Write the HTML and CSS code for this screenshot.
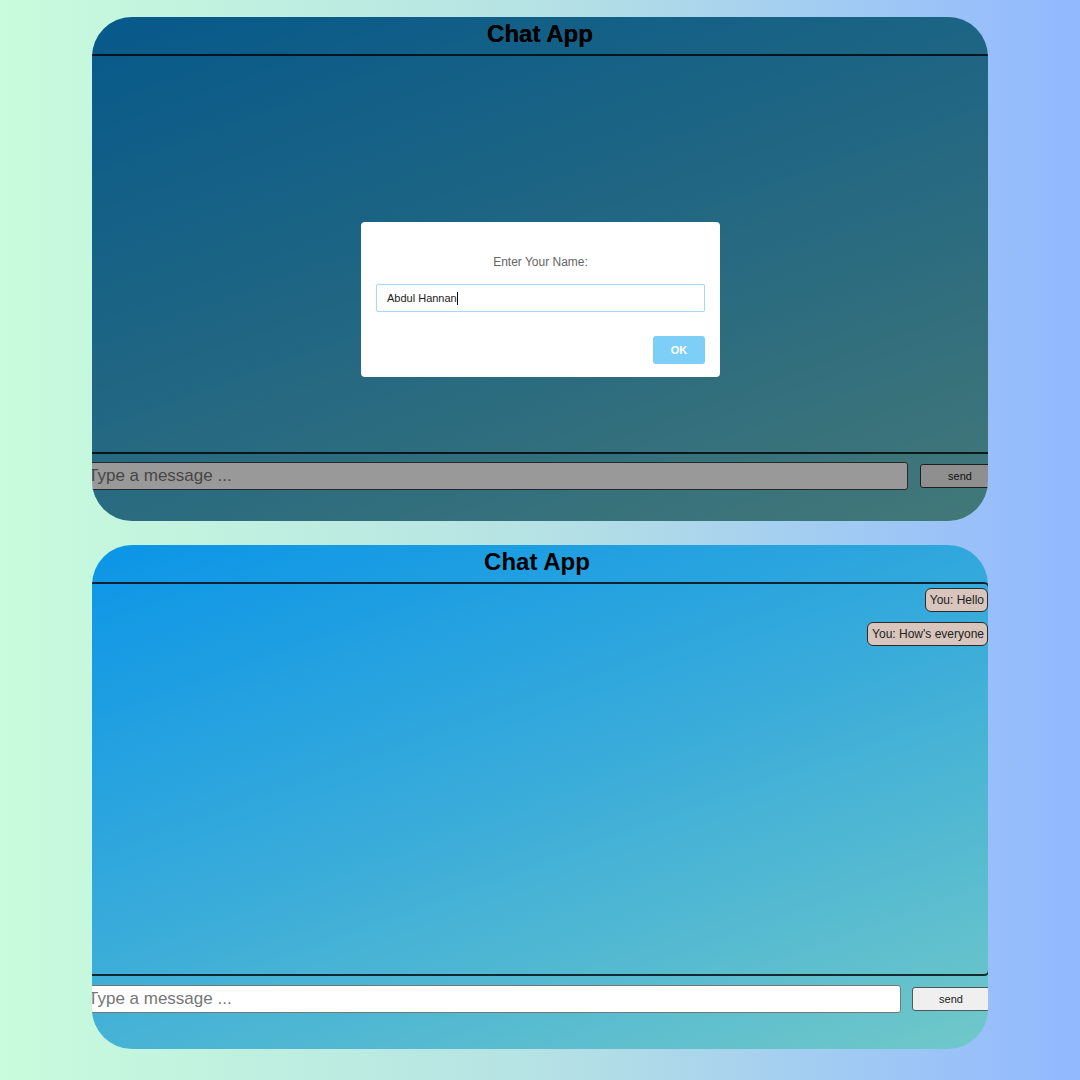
FILE: index.html
```html
<!DOCTYPE html>
<html>
<head>
<meta charset="utf-8">
<link rel="stylesheet" href="styles.css">
</head>
<body>
<div class="page">
  <section class="card card-modal">
    <div class="chat chat-top">
      <h1 class="title">Chat App</h1>
      <div class="messages messages-top"></div>
      <div class="composer composer-top">
        <input class="msg-input" type="text" placeholder="Type a message ...">
        <button class="send">send</button>
      </div>
    </div>
    <div class="overlay"></div>
    <div class="title-layer"><h1 class="title">Chat App</h1></div>
    <div class="dialog">
      <p class="dialog-label">Enter Your Name:</p>
      <div class="dialog-input"><span class="dialog-value">Abdul Hannan</span><span class="caret"></span></div>
      <div class="dialog-actions"><button class="ok">OK</button></div>
    </div>
  </section>

  <section class="card card-chat">
    <div class="chat chat-bottom">
      <h1 class="title">Chat App</h1>
      <div class="messages messages-bottom">
        <div class="bubble">You: Hello</div>
        <div class="bubble">You: How's everyone</div>
      </div>
      <div class="composer composer-bottom">
        <input class="msg-input" type="text" placeholder="Type a message ...">
        <button class="send">send</button>
      </div>
    </div>
  </section>
</div>
</body>
</html>
```

FILE: styles.css
```css
html, body {
  margin: 0;
  padding: 0;
}
body {
  width: 1080px;
  height: 1080px;
  background: linear-gradient(90deg, #c8fcdc 0%, #b5e2e4 50%, #92b8fe 100%);
  font-family: "Liberation Sans", Arial, sans-serif;
  overflow: hidden;
}
.page {
  display: flex;
  flex-direction: column;
  align-items: center;
  gap: 24px;
  padding-top: 17px;
}
.card {
  position: relative;
  width: 896px;
  height: 504px;
  border-radius: 40px;
  overflow: hidden;
  background: linear-gradient(160deg, #0b95e7 0%, #36aadb 45%, #70c8c8 100%);
}
.chat {
  display: flex;
  flex-direction: column;
}
.title {
  margin: 0;
  height: 37px;
  line-height: 34px;
  font-size: 24px;
  font-weight: bold;
  color: #000;
  text-align: center;
}
.chat-bottom .title {
  margin-left: -6px;
}
.messages {
  margin-left: -12px;
  border: 2px solid rgba(0, 0, 0, 0.78);
  border-radius: 6px;
  box-sizing: border-box;
  display: flex;
  flex-direction: column;
  align-items: flex-end;
  gap: 10px;
  padding: 4px 0 0 0;
}
.messages-top {
  height: 400px;
  margin-right: -6px;
}
.messages-bottom {
  height: 394px;
  margin-right: -2px;
}
.bubble {
  background: #d8c5bd;
  border: 1.5px solid #2b2b2b;
  border-radius: 6px;
  font-size: 12px;
  color: #222;
  padding: 4px 3px 4px 4px;
  line-height: 14px;
}
.composer {
  display: flex;
  align-items: center;
  margin-left: -6px;
}
.composer-top {
  margin-top: 8px;
  gap: 12px;
}
.composer-bottom {
  margin-top: 9px;
  gap: 11px;
}
.msg-input {
  flex: none;
  box-sizing: border-box;
  height: 28px;
  border: 1px solid #767676;
  border-radius: 3px;
  background: #fff;
  font-family: "Liberation Sans", Arial, sans-serif;
  font-size: 17px;
  padding: 0 0 0 1px;
  color: #333;
  outline: none;
}
.msg-input::placeholder {
  color: #767676;
}
.composer-top .msg-input {
  width: 822px;
  border-color: #444;
}
.composer-bottom .msg-input {
  width: 815px;
  height: 28px;
}
.send {
  flex: none;
  box-sizing: border-box;
  height: 24px;
  border: 1px solid #767676;
  border-radius: 3px;
  background: #efefef;
  font-family: "Liberation Sans", Arial, sans-serif;
  font-size: 11px;
  color: #222;
  padding: 0;
}
.composer-top .send {
  width: 80px;
  border-color: #333;
}
.composer-bottom .send {
  width: 78px;
  border-color: #555;
}
.overlay {
  position: absolute;
  inset: 0;
  background: rgba(0, 0, 0, 0.4);
}
.title-layer {
  position: absolute;
  top: 0;
  left: 0;
  right: 0;
}
.dialog {
  position: absolute;
  left: 269px;
  top: 205px;
  width: 359px;
  height: 155px;
  box-sizing: border-box;
  background: #fff;
  border-radius: 4px;
  padding: 33px 15px 0 15px;
  display: flex;
  flex-direction: column;
}
.dialog-label {
  margin: 0;
  font-size: 12px;
  line-height: 14px;
  color: #666;
  text-align: center;
}
.dialog-input {
  margin-top: 15px;
  height: 28px;
  box-sizing: border-box;
  border: 1px solid #a9d6fb;
  box-shadow: 0 0 1px #cbe6fb;
  border-radius: 2px;
  display: flex;
  align-items: center;
  padding-left: 10px;
}
.dialog-value {
  font-size: 11px;
  color: #222;
}
.caret {
  width: 1px;
  height: 13px;
  background: #111;
}
.dialog-actions {
  display: flex;
  justify-content: flex-end;
  margin-top: 24px;
}
.ok {
  width: 52px;
  height: 28px;
  border: none;
  border-radius: 3px;
  background: #7dcff8;
  color: #fff;
  font-family: "Liberation Sans", Arial, sans-serif;
  font-weight: bold;
  font-size: 11px;
  padding: 0;
}
```
